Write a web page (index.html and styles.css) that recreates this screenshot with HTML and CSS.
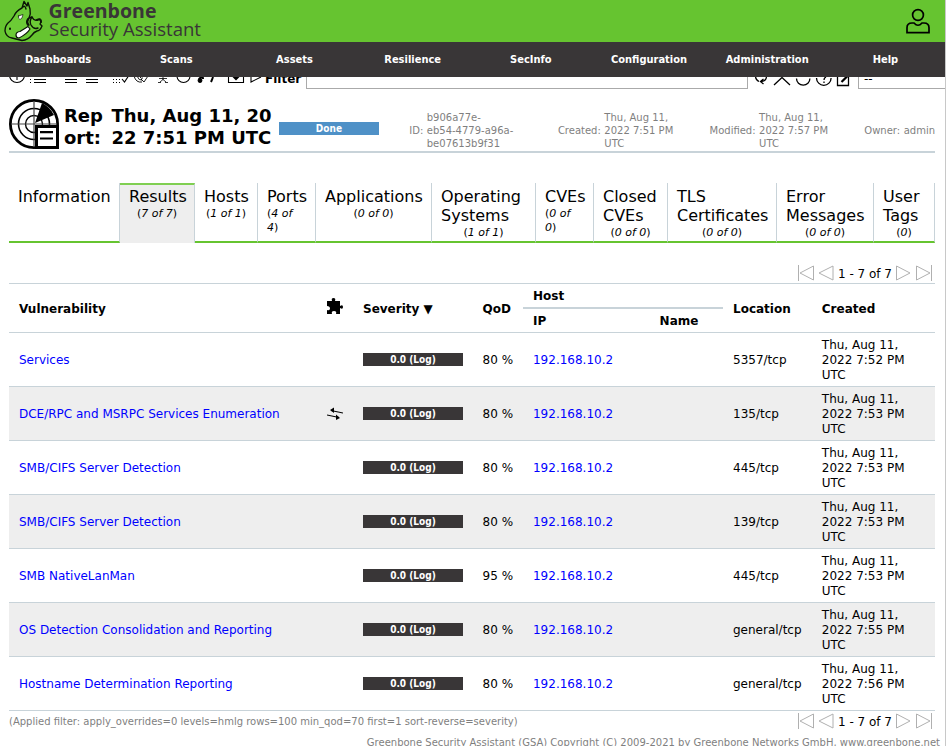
FILE: index.html
```html
<!DOCTYPE html>
<html lang="en">
<head>
<meta charset="utf-8">
<title>Greenbone Security Assistant</title>
<link rel="stylesheet" href="styles.css">
</head>
<body>
<svg class="defs" aria-hidden="true">
  <symbol id="first" viewBox="0 0 16 16"><path d="M.5 0v16M15.5 1v14L2 8z"/></symbol>
  <symbol id="prev" viewBox="0 0 16 16"><path d="M15 1v14L1 8z"/></symbol>
  <symbol id="next" viewBox="0 0 16 16"><path d="M.5 1v14L14 8z"/></symbol>
  <symbol id="last" viewBox="0 0 16 16"><path d="M15.5 0v16M.5 1v14L14 8z"/></symbol>
</svg>
<div class="app">
<header class="brand">
  <svg class="logo" viewBox="0 0 210 42" width="210" height="42">
    <g fill="none" stroke="#0b1606" stroke-width="1.4" stroke-linejoin="round" stroke-linecap="round">
      <path fill="#6ccb36" d="M22 8L24 1.500L27 6L28 2.500L30 9Q31 14 29 18L32 17Q34 21 37 20Q41 18 41 22L40 24L42 26Q40 31 37 31Q34 32 32 35Q28 40 22 40.500L12 38Q6 37 5 31Q5 26 8 23Q11 21 14 16Q16 11 22 8Z"/>
      <path d="M23 7Q25 5 26 9M29 18Q26 22 29 25M32 17Q29 21 31 25Q34 30 38 28"/>
      <path stroke-width="2" d="M28 19Q26 22 28 25M37 20Q41 18 41 22"/>
      <path fill="#fff" stroke-width=".7" d="M18.500 16L23 14.500Q22.500 19 20 19.500Q18 19 18.500 16Z"/>
      <path fill="#fff" stroke-width="1.2" d="M16 35Q16 32 20 31.500L28 26.500L30 29Q27 34 19 38Q16 38 16 35Z"/>
      <path stroke-width="2" d="M10 28.500v.5"/>
    </g>
    <text class="logo-name" x="48.500" y="17.500" textLength="108" lengthAdjust="spacingAndGlyphs">Greenbone</text>
    <text class="logo-sub" x="49" y="35.500" textLength="152" lengthAdjust="spacingAndGlyphs">Security Assistant</text>
  </svg>
  <svg class="user" viewBox="0 0 26 26" width="26" height="26"><circle cx="13" cy="7" r="5.4"/><path d="M2 24.700v-5Q2 15 7 15h2q4 4.500 8 0h2q5 0 5 4.700v5z"/></svg>
</header>
<nav class="menu"><a>Dashboards</a><a>Scans</a><a>Assets</a><a>Resilience</a><a>SecInfo</a><a>Configuration</a><a>Administration</a><a>Help</a></nav>

<div class="toolbar">
  <svg class="tools" viewBox="0 77 262 12" width="262" height="12">
    <g fill="none" stroke="#000" stroke-width="1.1">
      <path d="M9.500 75A7.500 7.500 0 0 0 24.500 75M17 76v4"/>
      <path d="M34 79.500h12M34 82.500h12M65 79.500h12M65 82.500h12M86 79.500h12M86 82.500h12"/>
      <path stroke-dasharray="1 2" d="M30 79.500h2M30 82.500h2M113 79.500h8M113 82.500h8"/>
      <path d="M122 79l2.500 3 4-6"/>
      <path stroke-width=".9" d="M134 76q2 7 8 6M137 76q2 5 5 4M140 77q1 2 3 1M141 79l3 3 4-6"/>
      <path stroke-width=".8" d="M159 78.500h8M163 77v3M160 82l3-2.500 3 2.500M158 82.500h3M165 82.500h3"/>
      <path d="M177 76a6.500 6.500 0 0 0 13 0"/>
      <path stroke-width="2" d="M199 79q4-4 4 0M213 77q-1 3-2 5"/><circle cx="200" cy="80.500" r="1.900" fill="#000"/>
      <path d="M228.500 76v6.500h15V76"/><path fill="#000" stroke="none" d="M232.500 77h7l-3.500 3.500z"/><path d="M251 76v6l10-5"/>
    </g>
  </svg>
  <b class="filter-label">Filter</b>
  <span class="filter-input"></span>
  <svg class="actions" viewBox="748 77 110 12" width="110" height="12">
    <g fill="none" stroke="#000" stroke-width="1.300">
      <path d="M755.500 76q0 4 3.500 5.500M766.500 76q0 5-5 5.500M763.500 79l-3 2.500 3 2.500M774 85l8-7.500 8 7.500M779 75l3 2.500 3-2.500M796.500 78.500a6.700 6.700 0 0 0 13.400 0M816.500 78a7.300 7.300 0 0 0 14.600 0M826 77q-2 1-2 3M824 81.500v1.500M837.500 76v9.500h11V76"/>
      <path stroke-width="2.200" d="M841.500 82l6-6"/>
    </g>
  </svg>
  <span class="filter-select">--</span>
</div>

<section class="report">
  <svg class="radar" viewBox="0 0 50 50" width="50" height="50">
    <circle cx="25" cy="25" r="23.600" fill="#fff" stroke="#000" stroke-width="2.800"/>
    <g fill="none" stroke="#000"><circle cx="25" cy="25" r="15.500" stroke-width="1.600"/><circle cx="25" cy="25" r="8.500" stroke-width="1.400"/><path stroke="#444" stroke-width="1.200" d="M25 2v46M2 25h46"/></g>
    <path d="M26 24L33 4Q41 8 45 16Z"/>
    <path fill="#fff" stroke="#000" stroke-width="3" d="M27.500 27.500h21v21h-21z"/><path stroke="#000" stroke-width="2.200" d="M31 33.200h13M31 39.500h13"/>
  </svg>
  <h1><span>Rep<br>ort:</span><span>Thu, Aug 11, 20<br>22 7:51 PM UTC</span></h1>
  <span class="status">Done</span>
  <div class="meta id"><span>ID:</span><span>b906a77e-<br>eb54-4779-a96a-<br>be07613b9f31</span></div>
  <div class="meta created"><span>Created:</span><span>Thu, Aug 11,<br>2022 7:51 PM<br>UTC</span></div>
  <div class="meta modified"><span>Modified:</span><span>Thu, Aug 11,<br>2022 7:57 PM<br>UTC</span></div>
  <div class="meta owner"><span>Owner:</span><span>admin</span></div>
</section>

<div class="tabs">
  <div class="tab">Information</div>
  <div class="tab active">Results<small>(<i>7 of 7</i>)</small></div>
  <div class="tab">Hosts<small>(<i>1 of 1</i>)</small></div>
  <div class="tab wrap">Ports<small>(<i>4 of<br>4</i>)</small></div>
  <div class="tab">Applications<small>(<i>0 of 0</i>)</small></div>
  <div class="tab">Operating<br>Systems<small>(<i>1 of 1</i>)</small></div>
  <div class="tab wrap">CVEs<small>(<i>0 of<br>0</i>)</small></div>
  <div class="tab">Closed<br>CVEs<small>(<i>0 of 0</i>)</small></div>
  <div class="tab">TLS<br>Certificates<small>(<i>0 of 0</i>)</small></div>
  <div class="tab">Error<br>Messages<small>(<i>0 of 0</i>)</small></div>
  <div class="tab">User<br>Tags<small>(<i>0</i>)</small></div>
</div>

<div class="pager top"><svg><use href="#first"/></svg><svg><use href="#prev"/></svg><span>1 - 7 of 7</span><svg><use href="#next"/></svg><svg><use href="#last"/></svg></div>

<table>
  <colgroup><col class="c-vuln"><col class="c-sol"><col class="c-sev"><col class="c-qod"><col class="c-ip"><col class="c-name"><col class="c-loc"><col class="c-date"></colgroup>
  <thead>
    <tr class="h1"><th rowspan="2">Vulnerability</th>
      <th rowspan="2"><svg class="puzzle" viewBox="0 0 16 16" width="16" height="16"><path d="M0 3H5Q4 0 6.500 0T8 3h5v5q3-2 3 1t-3 1v6H9q1-3-2-3t-2 3H0v-4q3 1 3-1.500T0 8z"/></svg></th>
      <th rowspan="2">Severity ▼</th><th rowspan="2">QoD</th><th class="host" colspan="2">Host</th><th rowspan="2">Location</th><th rowspan="2">Created</th></tr>
    <tr class="h2"><th>IP</th><th class="name">Name</th></tr>
  </thead>
  <tbody>
    <tr><td><a>Services</a></td><td></td><td><span class="sev">0.0 (Log)</span></td><td>80 %</td><td><a>192.168.10.2</a></td><td></td><td>5357/tcp</td><td>Thu, Aug 11,<br>2022 7:52 PM<br>UTC</td></tr>
    <tr><td><a>DCE/RPC and MSRPC Services Enumeration</a></td><td><svg class="swap" viewBox="0 0 16 16" width="16" height="16"><path fill="none" stroke="#000" stroke-width="1.100" d="M4 4.500l12 2.500M0 9l12 2.500"/><path d="M3 4l4-2.500v5.500zM13 12l-4-3.500v5.500z"/></svg></td><td><span class="sev">0.0 (Log)</span></td><td>80 %</td><td><a>192.168.10.2</a></td><td></td><td>135/tcp</td><td>Thu, Aug 11,<br>2022 7:53 PM<br>UTC</td></tr>
    <tr><td><a>SMB/CIFS Server Detection</a></td><td></td><td><span class="sev">0.0 (Log)</span></td><td>80 %</td><td><a>192.168.10.2</a></td><td></td><td>445/tcp</td><td>Thu, Aug 11,<br>2022 7:53 PM<br>UTC</td></tr>
    <tr><td><a>SMB/CIFS Server Detection</a></td><td></td><td><span class="sev">0.0 (Log)</span></td><td>80 %</td><td><a>192.168.10.2</a></td><td></td><td>139/tcp</td><td>Thu, Aug 11,<br>2022 7:53 PM<br>UTC</td></tr>
    <tr><td><a>SMB NativeLanMan</a></td><td></td><td><span class="sev">0.0 (Log)</span></td><td>95 %</td><td><a>192.168.10.2</a></td><td></td><td>445/tcp</td><td>Thu, Aug 11,<br>2022 7:53 PM<br>UTC</td></tr>
    <tr><td><a>OS Detection Consolidation and Reporting</a></td><td></td><td><span class="sev">0.0 (Log)</span></td><td>80 %</td><td><a>192.168.10.2</a></td><td></td><td>general/tcp</td><td>Thu, Aug 11,<br>2022 7:55 PM<br>UTC</td></tr>
    <tr><td><a>Hostname Determination Reporting</a></td><td></td><td><span class="sev">0.0 (Log)</span></td><td>80 %</td><td><a>192.168.10.2</a></td><td></td><td>general/tcp</td><td>Thu, Aug 11,<br>2022 7:56 PM<br>UTC</td></tr>
  </tbody>
</table>

<div class="bottom">
  <span class="applied">(Applied filter: apply_overrides=0 levels=hmlg rows=100 min_qod=70 first=1 sort-reverse=severity)</span>
  <div class="pager"><svg><use href="#first"/></svg><svg><use href="#prev"/></svg><span>1 - 7 of 7</span><svg><use href="#next"/></svg><svg><use href="#last"/></svg></div>
</div>
<footer>Greenbone Security Assistant (GSA) Copyright (C) 2009-2021 by Greenbone Networks GmbH, www.greenbone.net</footer>
</div>
</body>
</html>
```
FILE: styles.css
```css
* { box-sizing: border-box; }
body { margin: 0; height: 746px; overflow: hidden; background: #fff; color: #000; font: 12px/15px "DejaVu Sans", sans-serif; }
svg { display: block; flex: none; }
.defs { width: 0; height: 0; position: absolute; }
.app { width: 946px; height: 746px; overflow: hidden; border-right: 1px solid #c8c8c8; }

.brand { height: 42px; background: #66c430; display: flex; justify-content: space-between; align-items: center; padding-right: 14px; }
.logo text { fill: #393637; font-family: "Open Sans", sans-serif; }
.logo-name { font-size: 20px; font-weight: 700; }
.logo .logo-sub { font-size: 18px; font-weight: 400; }
.user { fill: none; stroke: #000; stroke-width: 1.700; }

.menu { height: 35px; background: #393637; display: grid; grid-template-columns: repeat(8, 118.200px); overflow: hidden; }
.menu a { color: #fff; font-family: "DejaVu Sans Condensed", "DejaVu Sans", sans-serif; font-stretch: condensed; font-size: 11px; font-weight: 700; line-height: 35px; text-align: center; padding-right: 2px; }

.toolbar { height: 12px; display: flex; overflow: hidden; }
.filter-label { width: 44px; padding-left: 3px; line-height: 15px; margin-top: -5px; }
.filter-input { width: 442px; border: 1px solid #aaa; border-top: 0; }
.filter-select { flex: 1; border: 1px solid #aaa; border-width: 0 0 1px 1px; padding-left: 5px; line-height: 4px; }

.report { margin: 0 10px 0 9px; height: 64px; padding-top: 10px; border-bottom: 2px solid #c8d3d9; display: flex; color: #7f7f7f; font-size: 10px; line-height: 13px; }
h1 { margin: 6px 0 0 5px; width: 215px; display: flex; font-size: 18px; line-height: 22px; color: #000; white-space: nowrap; }
h1 span:first-child { width: 47.500px; }
.status, .sev { font-family: "DejaVu Sans Condensed", "DejaVu Sans", sans-serif; font-stretch: condensed; font-size: 10px; font-weight: 700; line-height: 13px; text-align: center; color: #fff; }
.status { width: 100px; height: 13px; margin-top: 23px; background: #4f91c7; }
.meta { display: flex; align-items: center; gap: 3.500px; height: 39px; margin-top: 12px; white-space: nowrap; }
.id { margin-left: 30.300px; width: 148.700px; }
.created { width: 151.700px; }
.modified { width: 154.800px; }

.tabs { margin: 30px 10px 0 9px; height: 60px; display: grid; grid-template-columns: 111px 75px 63px 58px 116px 104px 58px 74px 109px 97px 61px; font-size: 16px; line-height: 19px; }
.tab { border-right: 1px solid #c8d3d9; border-bottom: 2px solid #66c430; padding: 4px 0 0 9px; white-space: nowrap; }
.tab small { display: block; margin: 1px 9px 0 0; font-size: 11px; line-height: 14px; text-align: center; }
.tab.wrap small { text-align: left; }
.tab.active { background: #eee; border-top: 2px solid #80cf52; border-bottom: 0; padding-top: 2px; }

.pager { display: flex; align-items: center; gap: 4px; height: 16px; }
.pager svg { width: 16px; height: 16px; fill: none; stroke: #b0b0b0; stroke-width: 1; }
.pager span { white-space: nowrap; padding-top: 2px; }
.pager.top { margin: 22px 13px 2px 0; justify-content: flex-end; }

table { width: 926px; margin-left: 9px; table-layout: fixed; border-spacing: 0; }
.c-vuln { width: 308px; } .c-sol { width: 36px; } .c-sev { width: 119.600px; } .c-qod { width: 50.400px; }
.c-ip { width: 112px; } .c-name { width: 88px; } .c-loc { width: 88.800px; } .c-date { width: 123.200px; }
th, td { padding: 2px 0 0 10px; text-align: left; vertical-align: middle; border-bottom: 1px solid #c8d3d9; white-space: nowrap; }
.h1 th { border-top: 1px solid #c8d3d9; }
.h1 { height: 26px; }
.h2 { height: 24px; }
th.host { border-bottom: 2px solid #c8d3d9; }
th.name { padding: 2px 0 0; text-align: center; }
.puzzle { margin-top: -6px; }
.swap { margin-top: -2px; }
tbody tr { height: 54px; }
tbody tr:nth-child(even) { background: #eee; }
td a { color: #00f; }
.sev { display: block; width: 100px; height: 13px; margin-top: -3px; background: #393637; }

.bottom { margin: 2px 13px 0 9px; display: flex; justify-content: space-between; align-items: center; }
.applied { color: #7f7f7f; font-size: 10px; }
footer { margin: 6px 5px 0 0; color: #7f7f7f; font-size: 10px; text-align: right; }
```
